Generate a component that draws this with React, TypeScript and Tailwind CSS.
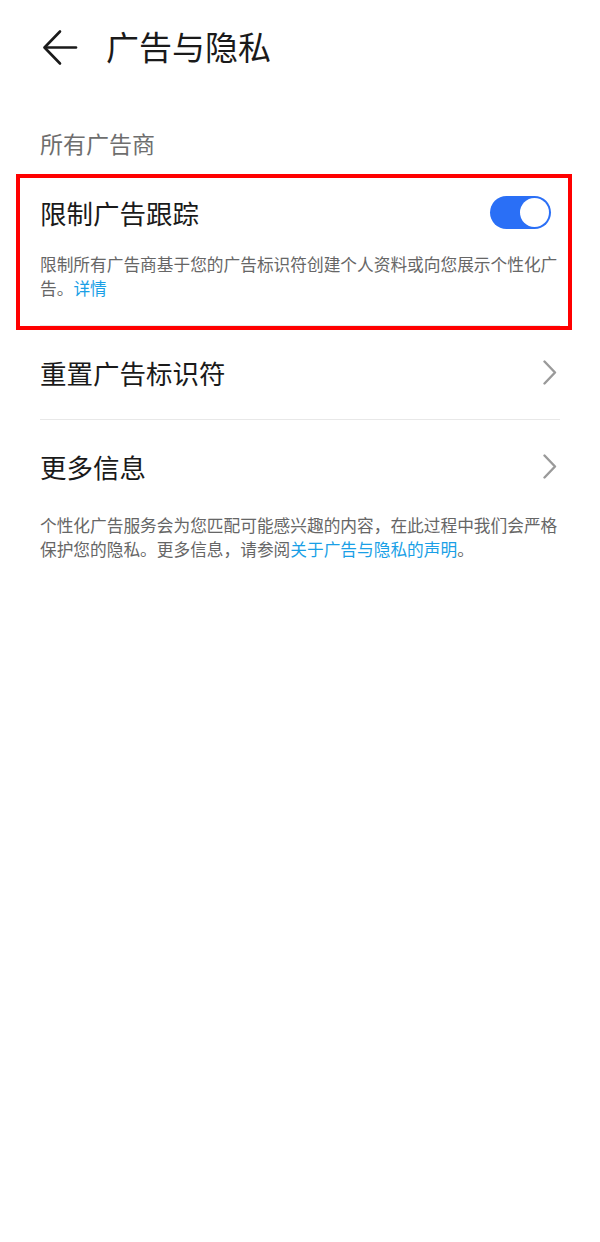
import React from "react";

const font = { fontFamily: '"Noto Sans CJK SC", "Noto Sans", sans-serif' };

function Chevron() {
  return (
    <svg width="16" height="26" viewBox="0 0 16 26" fill="none" className="shrink-0 mr-[2px]">
      <path d="M2.5 1.5 L13 12.5 L2.5 23.5" stroke="#9a9a9a" strokeWidth="2.4" strokeLinecap="round" strokeLinejoin="round" />
    </svg>
  );
}

export default function App() {
  return (
    <div className="w-[600px] h-[1242px] bg-white" style={font}>
      {/* header */}
      <div className="h-[94px] flex items-center">
        <svg width="40" height="40" viewBox="0 0 40 40" fill="none" className="ml-[40px]">
          <path d="M36 20.5 H5" stroke="#1a1a1a" strokeWidth="2.6" strokeLinecap="round" />
          <path d="M20 4.5 L4.5 20.5 L20 36.5" stroke="#1a1a1a" strokeWidth="2.6" strokeLinecap="round" strokeLinejoin="round" />
        </svg>
        <div className="ml-[26px] text-[33px] leading-[40px] text-[#1a1a1a] mt-[-2px]">广告与隐私</div>
      </div>

      {/* section label */}
      <div className="mt-[34px] ml-[40px] text-[23px] leading-[30px] text-[#6e6e6e]">所有广告商</div>

      {/* highlighted row */}
      <div className="mt-[16px] ml-[16px] w-[556px] border-4 border-[#ff0000] pl-[20px] pr-[8px]">
        <div className="pt-[18px] pb-[25px] border-b border-[#e8e8e8]">
          <div className="flex items-center justify-between h-[34px]">
            <div className="text-[26.5px] leading-[34px] text-[#1a1a1a]">限制广告跟踪</div>
            <div className="relative w-[61px] h-[33px] rounded-full bg-[#2a6ff6] mr-[9px] mt-[-2px]">
              <div className="absolute top-[2px] right-[2px] w-[29px] h-[29px] rounded-full bg-white" />
            </div>
          </div>
          <div className="mt-[22px] text-[16.7px] leading-[24px] text-[#666666]">
            限制所有广告商基于您的广告标识符创建个人资料或向您展示个性化广<br />告。<span className="text-[#1a9fe6]">详情</span>
          </div>
        </div>
      </div>

      {/* rows */}
      <div className="mx-[40px]">
        <div className="h-[90px] flex items-center justify-between border-b border-[#e8e8e8] pb-[3px]">
          <div className="text-[26.5px] leading-[34px] text-[#1a1a1a]">重置广告标识符</div>
          <Chevron />
        </div>
        <div className="h-[93px] flex items-center justify-between">
          <div className="text-[26.5px] leading-[34px] text-[#1a1a1a]">更多信息</div>
          <Chevron />
        </div>
        <div className="text-[16.7px] leading-[24px] text-[#666666]">
          个性化广告服务会为您匹配可能感兴趣的内容，在此过程中我们会严格<br />保护您的隐私。更多信息，请参阅<span className="text-[#1a9fe6]">关于广告与隐私的声明</span>。
        </div>
      </div>
    </div>
  );
}
